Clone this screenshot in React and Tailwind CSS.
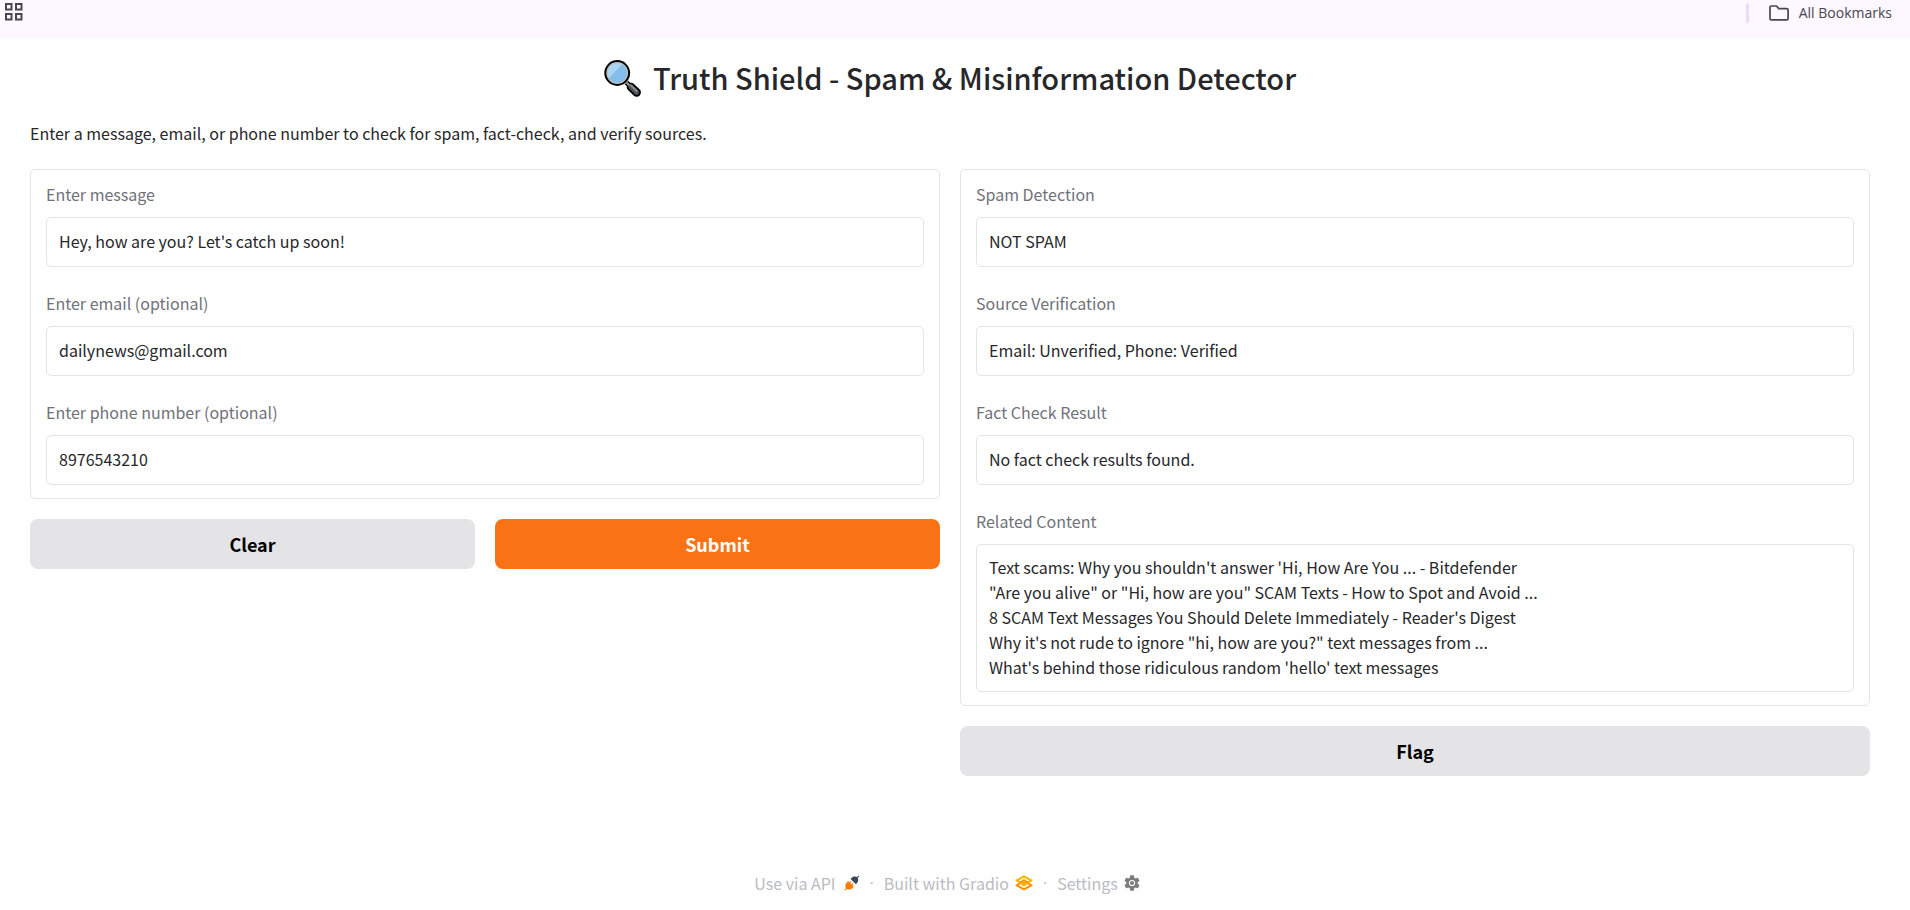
import React from "react";

const inputs = [
  { id: "message", label: "Enter message", value: "Hey, how are you? Let's catch up soon!" },
  { id: "email", label: "Enter email (optional)", value: "dailynews@gmail.com" },
  { id: "phone", label: "Enter phone number (optional)", value: "8976543210" },
];

const outputs = [
  { id: "spam", label: "Spam Detection", value: "NOT SPAM" },
  { id: "source", label: "Source Verification", value: "Email: Unverified, Phone: Verified" },
  { id: "fact", label: "Fact Check Result", value: "No fact check results found." },
  {
    id: "related",
    label: "Related Content",
    rows: 5,
    value: [
      "Text scams: Why you shouldn't answer 'Hi, How Are You ... - Bitdefender",
      "\"Are you alive\" or \"Hi, how are you\" SCAM Texts - How to Spot and Avoid ...",
      "8 SCAM Text Messages You Should Delete Immediately - Reader's Digest",
      "Why it's not rude to ignore \"hi, how are you?\" text messages from ...",
      "What's behind those ridiculous random 'hello' text messages",
    ].join("\n"),
  },
];

function AppsIcon() {
  return (
    <svg className="size-5" viewBox="0 0 20 20" fill="none" stroke="#4a454e" strokeWidth="2" aria-hidden="true">
      <rect x="2" y="2" width="5.5" height="5.5" />
      <rect x="12" y="2" width="5.5" height="5.5" />
      <rect x="2" y="12" width="5.5" height="5.5" />
      <rect x="12" y="12" width="5.5" height="5.5" />
    </svg>
  );
}

function FolderIcon() {
  return (
    <svg className="h-4 w-5" viewBox="0 0 20 16" fill="none" stroke="#4a454e" strokeWidth="1.7" strokeLinejoin="round" aria-hidden="true">
      <path d="M1 2.4C1 1.6 1.5 1 2.4 1H7.4L9.8 3.6H17.6C18.5 3.6 19.1 4.2 19.1 5V13.4C19.1 14.3 18.5 14.9 17.6 14.9H2.4C1.5 14.9 1 14.3 1 13.4Z" />
    </svg>
  );
}

function MagnifierIcon() {
  return (
    <svg className="size-[37px] shrink-0" viewBox="0 0 37 37" aria-hidden="true">
      <path d="M22.5 22.5L27 27" stroke="#000" strokeWidth="5" />
      <path d="M27 27L32.6 32.4" stroke="#000" strokeWidth="8.6" strokeLinecap="round" />
      <path d="M22.5 22.5L27 27" stroke="#9b9b9b" strokeWidth="2.2" />
      <path d="M27 27L32.6 32.4" stroke="#4d5356" strokeWidth="5" strokeLinecap="round" />
      <path d="M26.8 25.4L32.8 31.2" stroke="#8b9195" strokeWidth="1.8" strokeLinecap="round" />
      <circle cx="13.2" cy="13" r="12.9" fill="#000" />
      <circle cx="13.2" cy="13" r="10.9" fill="#b9bec2" />
      <circle cx="13.2" cy="13" r="9.6" fill="#83bdeb" />
      <path d="M3.8 14.8A9.6 9.6 0 0 1 17.8 4.6L5.2 18.2A9.6 9.6 0 0 1 3.8 14.8Z" fill="#a9d5f3" />
    </svg>
  );
}

function PlugIcon() {
  return (
    <svg className="size-4" viewBox="0 0 16 16" aria-hidden="true">
      <path d="M14.9 .4L13.1 2C11.2 1 9 1.3 7.7 2.7L6.6 3.9L11.9 9.2L13 8C14.3 6.6 14.5 4.6 13.7 2.9L15.5 1.1Z" fill="#3b4556" />
      <path d="M1 15.6L2.6 14.1C4.6 15 6.9 14.7 8.4 13.2L9.8 11.8L8.3 10.3L9.6 8.9L8.7 8L7.3 9.3L6.2 8.2L7.5 6.8L6.6 5.9L5.3 7.2L4.1 6.2L2.7 7.6C1.3 9.1 1 11.4 1.9 13.3L.3 14.9Z" fill="#ff7c00" />
    </svg>
  );
}

function GradioIcon() {
  return (
    <svg className="h-4 w-[18px]" viewBox="0 0 18 16" fill="none" strokeWidth="2.1" strokeLinejoin="round" aria-hidden="true">
      <path d="M1.7 10.4L9 5.4L16.3 10.4L9 14.4Z" stroke="#ff9100" />
      <path d="M1.7 5.4L9 1.5L16.3 5.4L9 10.4Z" stroke="#ffb400" />
      <path d="M5 8L9 5.4L13 8" stroke="#ff9f00" />
      <circle cx="9" cy="8" r="1.2" fill="#ff9f00" />
    </svg>
  );
}

function GearIcon() {
  return (
    <svg className="size-4" viewBox="2 2 20 20" fill="#7d7d7d" aria-hidden="true">
      <path d="M19.14 12.94c.04-.3.06-.61.06-.94 0-.32-.02-.64-.07-.94l2.03-1.58c.18-.14.23-.41.12-.61l-1.92-3.32c-.12-.22-.37-.29-.59-.22l-2.39.96c-.5-.38-1.03-.7-1.62-.94l-.36-2.54c-.04-.24-.24-.41-.48-.41h-3.84c-.24 0-.43.17-.47.41l-.36 2.54c-.59.24-1.13.57-1.62.94l-2.39-.96c-.22-.08-.47 0-.59.22L2.74 8.87c-.12.21-.08.47.12.61l2.03 1.58c-.05.3-.09.63-.09.94s.02.64.07.94l-2.03 1.58c-.18.14-.23.41-.12.61l1.92 3.32c.12.22.37.29.59.22l2.39-.96c.5.38 1.03.7 1.62.94l.36 2.54c.05.24.24.41.48.41h3.84c.24 0 .44-.17.47-.41l.36-2.54c.59-.24 1.13-.56 1.62-.94l2.39.96c.22.08.47 0 .59-.22l1.92-3.32c.12-.22.07-.47-.12-.61l-2.01-1.58z" />
      <circle cx="12" cy="12" r="3.2" fill="none" stroke="#fff" strokeWidth="1.3" />
    </svg>
  );
}

const boxClass =
  "block w-full resize-none overflow-hidden rounded-[5px] border border-[#e4e4e7] bg-white px-3 text-base text-[#27272a] outline-none";

function Field({ id, label, value, rows = 1, readOnly }) {
  return (
    <div className="px-[15px] py-3">
      <label htmlFor={id} className="mb-[11px] block text-base leading-6 text-[#71717a]">
        {label}
      </label>
      {rows > 1 ? (
        <textarea
          id={id}
          rows={rows}
          defaultValue={value}
          readOnly={readOnly}
          className={boxClass + " pt-[10px] pb-[11px] leading-[25px]"}
        />
      ) : (
        <input
          id={id}
          type="text"
          defaultValue={value}
          readOnly={readOnly}
          className={boxClass + " pt-[11px] pb-[13px] leading-6"}
        />
      )}
    </div>
  );
}

function Panel({ fields, readOnly }) {
  return (
    <div className="rounded-[5px] border border-[#e4e4e7] pb-px">
      {fields.map((f) => (
        <Field key={f.id} {...f} readOnly={readOnly} />
      ))}
    </div>
  );
}

function Button({ children, primary }) {
  return (
    <button
      type="button"
      className={
        "h-[50px] flex-1 rounded-lg pb-px text-lg font-semibold " +
        (primary ? "bg-[#f97316] text-white" : "bg-[#e4e4e7] text-black")
      }
    >
      {children}
    </button>
  );
}

function Dot() {
  return <span className="font-['Open_Sans',sans-serif]">·</span>;
}

export default function App() {
  return (
    <div className="min-h-screen bg-white font-['Noto_Sans_CJK_SC',sans-serif] text-[#27272a]">
      <header className="flex h-[38px] items-start justify-between bg-[#fdf7ff] pr-[18px] pl-1 font-['Open_Sans',sans-serif]">
        <button type="button" aria-label="Apps" className="pt-[2px]">
          <AppsIcon />
        </button>
        <div className="flex h-[25px] items-center">
          <span className="h-5 w-[3px] rounded-full bg-[#e9ddff]" />
          <button type="button" className="ml-5 flex items-center gap-[10px] text-sm text-[#4a454e]">
            <FolderIcon />
            All Bookmarks
          </button>
        </div>
      </header>

      <main className="pr-10 pl-[30px]">
        <h1 className="mb-[3px] flex h-20 items-center justify-center gap-3 text-[29px] font-medium">
          <MagnifierIcon />
          Truth Shield - Spam &amp; Misinformation Detector
        </h1>
        <p className="mb-[23px] text-base leading-[25px]">
          Enter a message, email, or phone number to check for spam, fact-check, and verify sources.
        </p>

        <div className="grid grid-cols-2 items-start gap-5">
          <form className="flex flex-col gap-5">
            <Panel fields={inputs} />
            <div className="flex gap-5">
              <Button>Clear</Button>
              <Button primary>Submit</Button>
            </div>
          </form>
          <section className="flex flex-col gap-5">
            <Panel fields={outputs} readOnly />
            <div className="flex">
              <Button>Flag</Button>
            </div>
          </section>
        </div>
      </main>

      <footer className="mt-[95px] flex items-center justify-center gap-[10px] pr-4 text-base leading-6 text-[#bbbbc2]">
        <a href="#api" className="flex items-center gap-2">
          Use via API <PlugIcon />
        </a>
        <Dot />
        <a href="#gradio" className="flex items-center gap-[6px]">
          Built with Gradio <GradioIcon />
        </a>
        <Dot />
        <a href="#settings" className="flex items-center gap-[6px]">
          Settings <GearIcon />
        </a>
      </footer>
    </div>
  );
}
